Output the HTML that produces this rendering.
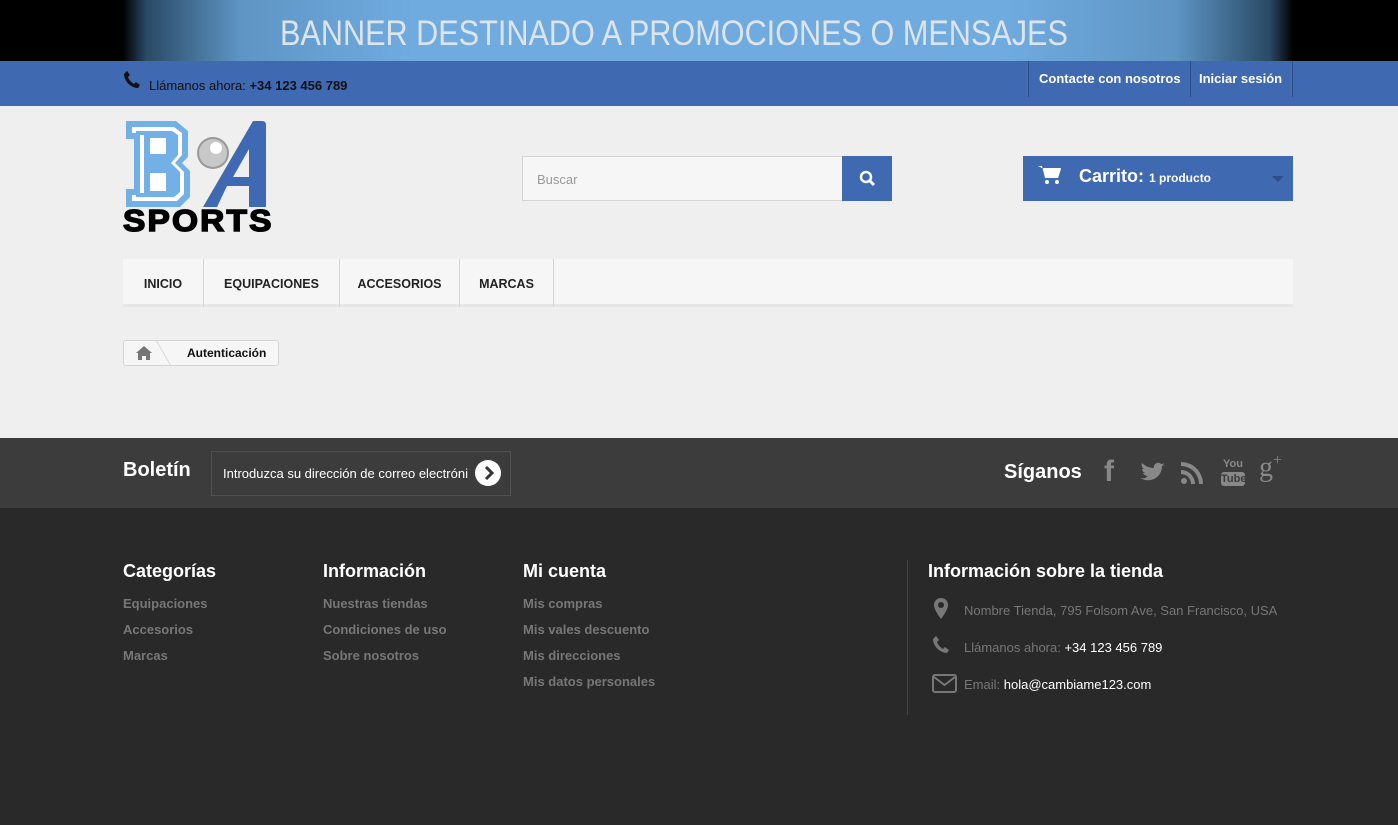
<!DOCTYPE html><html><head><meta charset="utf-8"><style>
*{margin:0;padding:0;box-sizing:border-box}
body{width:1398px;height:825px;overflow:hidden;font-family:"Liberation Sans",sans-serif;background:#292929;position:relative}
.a{position:absolute}
</style></head><body>
<div class="a" style="left:0;top:0;width:1398px;height:61px;background:#000"></div>
<div class="a" style="left:123px;top:0;width:1170px;height:61px;background:linear-gradient(90deg,#000 0,#2a4a66 2%,#5e95c4 10%,#70abe0 25%,#70abe0 75%,#5e95c4 90%,#2a4a66 98%,#000 100%)"></div>
<div class="a" style="left:280px;top:14px;font-size:35px;color:#dde4ec;transform:scaleX(.875);transform-origin:left;white-space:nowrap">BANNER DESTINADO A PROMOCIONES O MENSAJES</div>
<div class="a" style="left:0;top:61px;width:1398px;height:45px;background:#3f69b1"></div>
<svg class="a" style="left:123px;top:70px" width="20" height="20" viewBox="0 0 20 20"><path d="M4 1l3 4-2 2c1 3 3 5 6 7l2-2 4 3-2 3C8 18 1 11 1 4z" fill="#111"/></svg>
<div class="a" style="left:149px;top:78px;font-size:13px;color:#111">Llámanos ahora: <b>+34 123 456 789</b></div>
<div class="a" style="left:1028px;top:61px;width:265px;height:36px;border-left:1px solid #2c4f8c;border-right:1px solid #2c4f8c"></div>
<div class="a" style="left:1190px;top:61px;width:1px;height:36px;background:#2c4f8c"></div>
<div class="a" style="left:1039px;top:71px;font-size:13px;color:#fff;font-weight:bold">Contacte con nosotros</div>
<div class="a" style="left:1199px;top:71px;font-size:13px;color:#fff;font-weight:bold">Iniciar sesión</div>
<div class="a" style="left:0;top:106px;width:1398px;height:332px;background:#efefef"></div>
<svg class="a" style="left:126px;top:121px" width="72" height="86"><path d="M0 0h50l12 10v26l-6 6 8 8v26l-10 10H0V68h8V18H0z" fill="#72b0e6"/><path d="M6 6h42l8 6v22l-7 8 9 9v22l-7 7H6v-6h8V12H6z" fill="#fff"/><path d="M10 10h36l6 4v20l-7 8 9 9v20l-6 5H10v-4h8V14h-8z" fill="#72b0e6"/><rect x="24" y="17" width="16" height="16" fill="#fff"/><rect x="24" y="52" width="16" height="18" fill="#fff"/></svg>
<svg class="a" style="left:195px;top:121px" width="75" height="86"><path d="M58 0h9q4 0 4 4v82H54V65H32L22 86H8z M54 28L38 56h16z" fill="#3f6ab3" fill-rule="evenodd"/><circle cx="18" cy="32" r="16" fill="#999"/><circle cx="18" cy="32" r="14" fill="#c8c8c8"/><circle cx="21" cy="27" r="6" fill="#fff"/></svg>
<div class="a" style="left:123px;top:204px;font:900 31px/34px 'Liberation Sans';color:#000;letter-spacing:2px;-webkit-text-stroke:1.5px #000;transform:scaleX(1.08);transform-origin:left">SPORTS</div>
<div class="a" style="left:522px;top:156px;width:321px;height:45px;background:#f6f6f6;border:1px solid #d6d4d4"></div>
<div class="a" style="left:537px;top:172px;font-size:13px;color:#999">Buscar</div>
<div class="a" style="left:842px;top:156px;width:50px;height:45px;background:#3f69b1"></div>
<svg class="a" style="left:859px;top:170px" width="17" height="17"><circle cx="7" cy="7" r="5" stroke="#fff" stroke-width="2.5" fill="none"/><path d="M11 11l4 4" stroke="#fff" stroke-width="3"/></svg>
<div class="a" style="left:1023px;top:156px;width:270px;height:45px;background:#3f69b1"></div>
<svg class="a" style="left:1038px;top:165px" width="24" height="20"><path d="M0 1h4l3 12h13l3-9H6" fill="#fff"/><path d="M5 3h18l-3 10H8z" fill="#fff"/><circle cx="9" cy="17" r="2" fill="#fff"/><circle cx="19" cy="17" r="2" fill="#fff"/></svg>
<div class="a" style="left:1079px;top:166px;font-size:18px;color:#fff;font-weight:bold">Carrito: <span style="font-size:12px">1 producto</span></div>
<div class="a" style="left:1272px;top:176px;border:6px solid transparent;border-top-color:#2c4f8c"></div>
<div class="a" style="left:123px;top:259px;width:1170px;height:48px;background:#f6f6f6;border-bottom:3px solid #e6e6e6"></div>
<div class="a" style="left:123px;top:259px;height:48px;display:flex;font-size:12.5px;color:#222;font-weight:bold">
<div style="width:81px;padding-top:18px;text-align:center;border-right:1px solid #d6d4d4">INICIO</div>
<div style="width:136px;padding-top:18px;text-align:center;border-right:1px solid #d6d4d4">EQUIPACIONES</div>
<div style="width:120px;padding-top:18px;text-align:center;border-right:1px solid #d6d4d4">ACCESORIOS</div>
<div style="width:94px;padding-top:18px;text-align:center;border-right:1px solid #d6d4d4">MARCAS</div></div>
<div class="a" style="left:123px;top:340px;width:156px;height:26px;background:#f6f6f6;border:1px solid #d6d4d4;border-radius:3px"></div>
<svg class="a" style="left:136px;top:346px" width="16" height="14"><path d="M8 0l8 7h-2v7h-4v-4H6v4H2V7H0z" fill="#777"/></svg>
<div class="a" style="left:163px;top:340px;width:1px;height:26px;background:#d6d4d4;transform:skewX(30deg)"></div>
<div class="a" style="left:187px;top:346px;font-size:12px;color:#111;font-weight:bold">Autenticación</div>
<div class="a" style="left:0;top:438px;width:1398px;height:70px;background:#3c3c3c"></div>
<div class="a" style="left:123px;top:459px;font-size:20px;color:#fff;font-weight:bold">Boletín</div>
<div class="a" style="left:211px;top:451px;width:300px;height:45px;background:#3c3c3c;border:1px solid #515151"></div>
<div class="a" style="left:223px;top:466px;font-size:13px;color:#fff">Introduzca su dirección de correo electróni</div>
<div class="a" style="left:475px;top:460px;width:26px;height:26px;border-radius:50%;background:#fff"></div>
<svg class="a" style="left:475px;top:460px" width="26" height="26"><path d="M11 7l6 6-6 6" stroke="#333" stroke-width="3" fill="none"/></svg>
<div class="a" style="left:1004px;top:461px;font-size:20px;color:#fff;font-weight:bold">Síganos</div>
<div class="a" style="left:1104px;top:455px;font:bold 30px 'Liberation Sans';color:#888">f</div>
<svg class="a" style="left:1140px;top:462px" width="26" height="22"><path d="M25 3c-1 1-2 1-3 1 1-1 2-2 2-3-1 1-2 1-3 1-3-3-8 0-7 4C9 6 5 4 2 1c-1 2 0 5 2 6H2c0 2 2 4 4 4H3c1 2 3 3 5 3-2 2-5 3-8 2 11 6 22-1 22-12z" fill="#888"/></svg>
<svg class="a" style="left:1181px;top:462px" width="22" height="22"><circle cx="3" cy="19" r="3" fill="#888"/><path d="M0 8a14 14 0 0114 14h-4A10 10 0 000 12z M0 0a22 22 0 0122 22h-4A18 18 0 000 4z" fill="#888"/></svg>
<div class="a" style="left:1221px;top:459px;font:bold 11px/11px 'Liberation Sans';color:#888;text-align:center;width:24px">You<div style="background:#888;color:#3c3c3c;border-radius:3px;margin-top:2px;font-size:11px;line-height:14px">Tube</div></div>
<div class="a" style="left:1259px;top:452px;font:28px 'Liberation Serif';color:#888">g<span style="font-size:16px;vertical-align:top">+</span></div>
<div class="a" style="left:123px;top:561px;font-size:18px;color:#fff;font-weight:bold">Categorías</div>
<div class="a" style="left:323px;top:561px;font-size:18px;color:#fff;font-weight:bold">Información</div>
<div class="a" style="left:523px;top:561px;font-size:18px;color:#fff;font-weight:bold">Mi cuenta</div>
<div class="a" style="left:928px;top:561px;font-size:18px;color:#fff;font-weight:bold">Información sobre la tienda</div>
<div class="a" style="left:123px;top:591px;font-size:13px;color:#777;font-weight:bold;line-height:26px">Equipaciones<br>Accesorios<br>Marcas</div>
<div class="a" style="left:323px;top:591px;font-size:13px;color:#777;font-weight:bold;line-height:26px">Nuestras tiendas<br>Condiciones de uso<br>Sobre nosotros</div>
<div class="a" style="left:523px;top:591px;font-size:13px;color:#777;font-weight:bold;line-height:26px">Mis compras<br>Mis vales descuento<br>Mis direcciones<br>Mis datos personales</div>
<div class="a" style="left:907px;top:560px;width:1px;height:155px;background:#444"></div>
<svg class="a" style="left:933px;top:598px" width="16" height="22"><path d="M8 0a7 7 0 017 7c0 5-7 14-7 14S1 12 1 7a7 7 0 017-7z" fill="#777"/><circle cx="8" cy="7" r="3" fill="#292929"/></svg>
<svg class="a" style="left:932px;top:635px" width="20" height="20"><path d="M4 1l3 4-2 2c1 3 3 5 6 7l2-2 4 3-2 3C8 18 1 11 1 4z" fill="#777"/></svg>
<svg class="a" style="left:932px;top:674px" width="25" height="19"><rect x="1" y="1" width="23" height="17" rx="2" stroke="#777" stroke-width="2" fill="none"/><path d="M2 3l10.5 8L23 3" stroke="#777" stroke-width="2" fill="none"/></svg>
<div class="a" style="left:964px;top:603px;font-size:13px;color:#777">Nombre Tienda, 795 Folsom Ave, San Francisco, USA</div>
<div class="a" style="left:964px;top:640px;font-size:13px;color:#777">Llámanos ahora: <span style="color:#fff">+34 123 456 789</span></div>
<div class="a" style="left:964px;top:677px;font-size:13px;color:#777">Email: <span style="color:#fff">hola@cambiame123.com</span></div>
</body></html>
